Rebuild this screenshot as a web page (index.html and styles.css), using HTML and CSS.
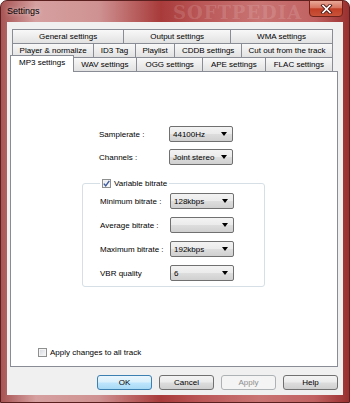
FILE: index.html
```html
<!DOCTYPE html>
<html lang="en">
<head>
    <meta charset="UTF-8">
    <meta name="viewport" content="width=device-width, initial-scale=1.0">
    <title>Settings</title>
    <link rel="stylesheet" href="styles.css">
</head>
<body>

<div class="window">
    <div class="titlebar">
        <span class="title">Settings</span>
        <span class="title-mark">SOFTPEDIA</span>
        <button class="close-btn">
            <svg width="13" height="10" viewBox="0 0 13 10">
                <path d="M3 1.5 L10 8.5 M10 1.5 L3 8.5" stroke="#4b1611" stroke-width="3.4" stroke-linecap="square"/>
                <path d="M3 1.5 L10 8.5 M10 1.5 L3 8.5" stroke="#ffffff" stroke-width="1.7" stroke-linecap="square"/>
            </svg>
        </button>
    </div>

    <div class="client">
        <!-- three rows of tabs, the selected row sits on the panel -->
        <div class="tabs">
            <div class="tab-row">
                <div class="tab">General settings</div>
                <div class="tab">Output settings</div>
                <div class="tab">WMA settings</div>
            </div>
            <div class="tab-row">
                <div class="tab">Player &amp; normalize</div>
                <div class="tab">ID3 Tag</div>
                <div class="tab">Playlist</div>
                <div class="tab">CDDB settings</div>
                <div class="tab">Cut out from the track</div>
            </div>
            <div class="tab-row">
                <div class="tab active">MP3 settings</div>
                <div class="tab">WAV settings</div>
                <div class="tab">OGG settings</div>
                <div class="tab">APE settings</div>
                <div class="tab">FLAC settings</div>
            </div>
        </div>

        <div class="panel">
            <div class="form">
                <div class="field">
                    <label>Samplerate :</label>
                    <div class="combo"><span>44100Hz</span><span class="arrow"></span></div>
                </div>
                <div class="field">
                    <label>Channels :</label>
                    <div class="combo"><span>Joint stereo</span><span class="arrow"></span></div>
                </div>
            </div>

            <fieldset class="group">
                <legend><span class="check checked"><svg width="7" height="7" viewBox="0 0 7 7"><path d="M0.8 3.6 L2.7 5.8 L6.3 0.8" fill="none" stroke="#3d5a9c" stroke-width="1.4"/></svg></span>Variable bitrate</legend>
                <div class="field">
                    <label>Minimum bitrate :</label>
                    <div class="combo"><span>128kbps</span><span class="arrow"></span></div>
                </div>
                <div class="field">
                    <label>Average bitrate :</label>
                    <div class="combo"><span></span><span class="arrow"></span></div>
                </div>
                <div class="field">
                    <label>Maximum bitrate :</label>
                    <div class="combo"><span>192kbps</span><span class="arrow"></span></div>
                </div>
                <div class="field">
                    <label>VBR quality</label>
                    <div class="combo"><span>6</span><span class="arrow"></span></div>
                </div>
            </fieldset>

            <div class="apply-all"><span class="check"></span>Apply changes to all track</div>
        </div>

        <div class="buttons">
            <button class="btn default">OK</button>
            <button class="btn">Cancel</button>
            <button class="btn" disabled>Apply</button>
            <button class="btn">Help</button>
        </div>
    </div>
</div>

</body>
</html>
```

FILE: styles.css
```css
* {
    box-sizing: border-box;
}
body {
    margin: 0;
    font-family: "Liberation Sans", Arial, sans-serif;
    font-size: 8px;
    color: #000;
}
.window {
    width: 350px;
    height: 403px;
    display: flex;
    flex-direction: column;
    border: 1px solid #5a2020;
    border-radius: 7px 7px 0 0;
    background: linear-gradient(90deg, #a85454 0%, #d6a0a0 10%, #cf9292 28%, #a83a3a 46%, #b95454 56%, #c97474 74%, #c16262 90%, #9a3030 100%);
}
.titlebar {
    position: relative;
    height: 21px;
    display: flex;
    justify-content: space-between;
    align-items: flex-start;
    padding: 0 6px;
}
.title {
    font-size: 9px;
    line-height: 21px;
    text-shadow: 0 0 4px rgba(255, 255, 255, 0.7);
}
.title-mark {
    position: absolute;
    left: 172px;
    top: 1px;
    font-family: "DejaVu Serif", serif;
    font-weight: bold;
    font-size: 18px;
    letter-spacing: 1px;
    color: rgba(255, 255, 255, 0.14);
}
.close-btn {
    width: 34px;
    height: 17px;
    margin-top: -1px;
    padding: 0;
    display: flex;
    align-items: center;
    justify-content: center;
    border: 1px solid #6e2219;
    border-radius: 0 0 4px 4px;
    background: linear-gradient(#e9a898 0%, #d77561 45%, #c23e26 52%, #c9533a 100%);
}
.client {
    flex: 1;
    margin: 0 6px 7px;
    padding: 7px 5px 5px 3px;
    background: #f0f0f0;
    display: flex;
    flex-direction: column;
}
.tabs {
    padding: 0 5px 0 2px;
}
.tab-row {
    display: flex;
    height: 14px;
}
.tab {
    flex: 1 1 auto;
    height: 14px;
    padding: 0 4px;
    border: 1px solid #898c95;
    border-bottom: none;
    background: linear-gradient(#f8f8f8, #e2e2e2);
    text-align: center;
    line-height: 13px;
    white-space: nowrap;
}
.tab + .tab {
    margin-left: -1px;
}
.tab.active {
    position: relative;
    z-index: 2;
    height: 17px;
    margin: -2px -1px -1px -2px;
    background: #fff;
    line-height: 14px;
}
.panel {
    height: 296px;
    padding: 54px 0 9px 0;
    background: #fff;
    border: 1px solid #898c95;
    display: flex;
    flex-direction: column;
}
.form {
    margin-left: 88px;
    display: flex;
    flex-direction: column;
    gap: 7px;
}
.field {
    display: flex;
    align-items: center;
    height: 16px;
}
.field label {
    width: 70px;
}
.combo {
    width: 64px;
    height: 16px;
    padding: 0 5px 0 3px;
    display: flex;
    align-items: center;
    justify-content: space-between;
    border: 1px solid #707070;
    border-radius: 2px;
    background: linear-gradient(#f3f3f3 0%, #ebebeb 48%, #dddddd 52%, #d0d0d0 100%);
}
.arrow {
    width: 0;
    height: 0;
    border-left: 3.5px solid transparent;
    border-right: 3.5px solid transparent;
    border-top: 4px solid #000;
}
.group {
    width: 183px;
    margin: 13px 0 0 71px;
    padding: 4px 0 5px 17px;
    border: 1px solid #d5dfe5;
    border-radius: 3px;
    display: flex;
    flex-direction: column;
    gap: 8px;
}
.group legend {
    display: flex;
    align-items: center;
    gap: 3px;
    height: 11px;
    padding: 0 2px;
}
.check {
    width: 9px;
    height: 9px;
    display: inline-flex;
    align-items: center;
    justify-content: center;
    border: 1px solid #8e8f8f;
    background: linear-gradient(135deg, #d2d6dc, #fbfbfb);
    box-shadow: inset 0 0 0 1px #f4f4f4;
}
.check.checked {
    background: linear-gradient(135deg, #e2e6ec, #ffffff);
}
.apply-all {
    margin-top: auto;
    padding-left: 27px;
    display: flex;
    align-items: center;
    gap: 3px;
    height: 9px;
}
.buttons {
    display: flex;
    justify-content: flex-end;
    gap: 7px;
    margin-top: 8px;
}
.btn {
    width: 55px;
    height: 15px;
    padding: 0;
    font-family: inherit;
    font-size: 8px;
    color: #000;
    border: 1px solid #707070;
    border-radius: 3px;
    background: linear-gradient(#f3f3f3 0%, #ebebeb 48%, #dddddd 52%, #cfcfcf 100%);
}
.btn.default {
    border-color: #3c7fb1;
    background: linear-gradient(#eaf6fd 0%, #d9f0fc 48%, #bee6fd 52%, #a7d9f5 100%);
}
.btn:disabled {
    color: #8d8d8d;
    border-color: #adb2b5;
    background: #f4f4f4;
}
```
